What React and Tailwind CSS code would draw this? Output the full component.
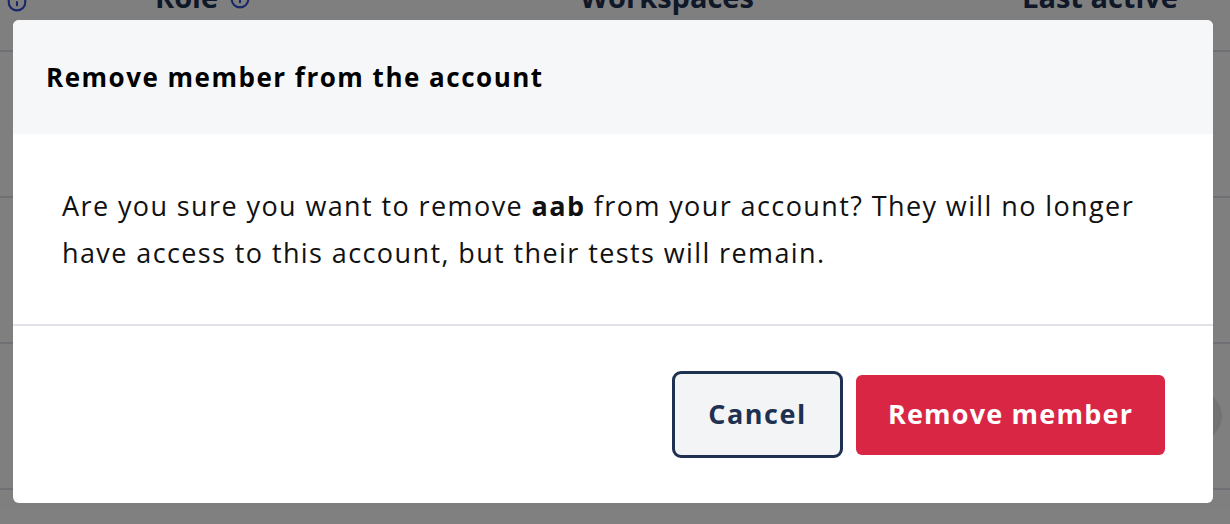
import { Info } from "lucide-react";

function BackgroundTable() {
  return (
    <div className="w-full bg-white text-[#1e3150]">
      {/* header row, mostly scrolled out of view */}
      <div className="h-[52px] border-b-2 border-[#dfe1e6] flex items-start overflow-hidden">
        <div className="w-[155px] pl-[7px] -mt-[8px]">
          <Info size={20} strokeWidth={2.5} className="text-[#2f4fd8]" />
        </div>
        <div className="w-[425px] flex items-center gap-[12px] -mt-[25px] text-[29px] font-bold">
          <span>Role</span>
          <Info size={20} strokeWidth={2.5} className="text-[#2f4fd8] mt-[4px]" />
        </div>
        <div className="w-[442px] -mt-[25px] text-[29px] font-bold">Workspaces</div>
        <div className="flex-1 -mt-[25px] text-[29px] font-bold">Last active</div>
      </div>
      <div className="h-[146px] border-b-2 border-[#dfe1e6]"></div>
      <div className="h-[146px] border-b-2 border-[#dfe1e6]"></div>
      <div className="h-[146px] border-b-2 border-[#dfe1e6] flex items-center justify-end pr-[8px]">
        <div className="w-[50px] h-[50px] rounded-full bg-[#e6e6e6]"></div>
      </div>
    </div>
  );
}

export default function App() {
  return (
    <div
      className="relative w-full h-[524px] overflow-hidden bg-white"
      style={{ fontFamily: "'Open Sans', 'Noto Sans', sans-serif" }}
    >
      <BackgroundTable />

      {/* overlay + dialog */}
      <div className="absolute inset-0 bg-black/50 pt-[20px] px-[13px]">
        <div className="w-[1200px] h-[483px] bg-white rounded-[6px] overflow-hidden flex flex-col">
          <div className="h-[114px] bg-[#f6f7f9] flex items-center pl-[33px]">
            <h2 className="text-[26px] font-bold text-black tracking-[1.5px]">
              Remove member from the account
            </h2>
          </div>

          <div className="h-[192px] flex items-center pl-[49px] border-b-2 border-[#e1e1e7]">
            <p className="text-[27px] leading-[47px] text-[#111111] tracking-[1.4px] whitespace-nowrap">
              Are you sure you want to remove <b>aab</b> from your account? They will no longer
              <br />
              have access to this account, but their tests will remain.
            </p>
          </div>

          <div className="flex-1 flex items-center justify-end gap-[13px] pr-[48px]">
            <button className="w-[171px] h-[87px] rounded-[9px] border-[3px] border-[#1e3150] bg-[#f3f4f6] text-[#1e3150] text-[27px] font-bold tracking-[1.5px]">
              Cancel
            </button>
            <button className="w-[309px] h-[80px] rounded-[6px] bg-[#d92645] text-white text-[27px] font-bold tracking-[1.2px]">
              Remove member
            </button>
          </div>
        </div>
      </div>
    </div>
  );
}
